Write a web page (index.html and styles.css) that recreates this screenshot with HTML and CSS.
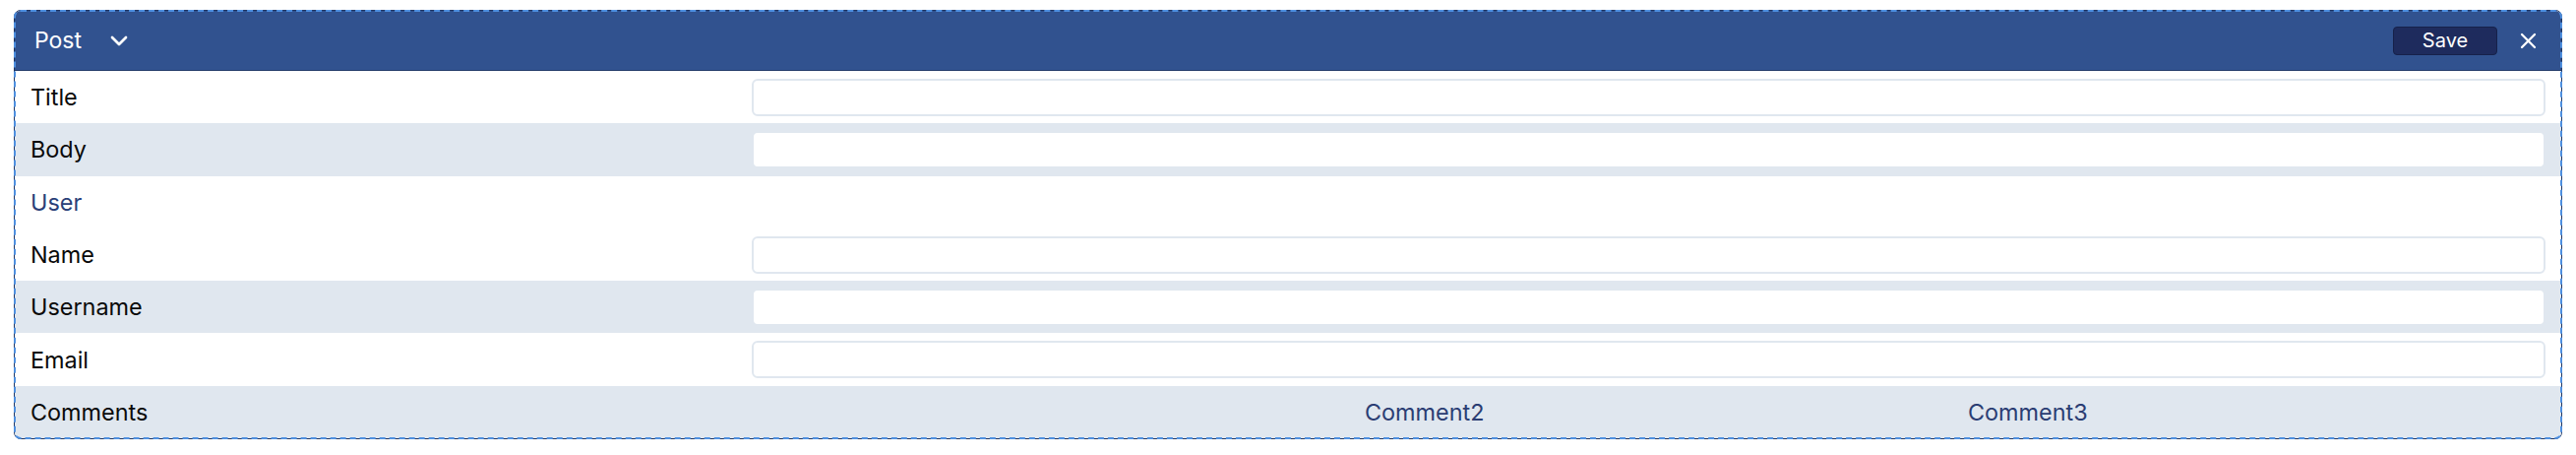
FILE: index.html
```html
<!DOCTYPE html>
<html>
<head>
<meta charset="utf-8">
<link rel="stylesheet" href="styles.css">
</head>
<body>
<div class="panel">
  <div class="panel-header">
    <div class="header-left">
      <span class="header-title">Post</span>
      <svg class="chevron" width="18" height="11" viewBox="0 0 18 11"><path d="M2 2 L9 9 L16 2" fill="none" stroke="#fff" stroke-width="2.7" stroke-linecap="round" stroke-linejoin="round"/></svg>
    </div>
    <div class="header-right">
      <button class="save-btn">Save</button>
      <svg class="close" width="17" height="17" viewBox="0 0 17 17"><path d="M2 2 L15 15 M15 2 L2 15" stroke="#fff" stroke-width="2.3" stroke-linecap="round"/></svg>
    </div>
  </div>
  <div class="rows">
    <div class="row">
      <div class="label">Title</div>
      <div class="value"><input class="field" type="text"></div>
    </div>
    <div class="row">
      <div class="label">Body</div>
      <div class="value"><input class="field" type="text"></div>
    </div>
    <div class="group">
      <div class="row group-title"><div class="label">User</div></div>
      <div class="group-rows">
        <div class="row">
          <div class="label">Name</div>
          <div class="value"><input class="field" type="text"></div>
        </div>
        <div class="row">
          <div class="label">Username</div>
          <div class="value"><input class="field" type="text"></div>
        </div>
        <div class="row">
          <div class="label">Email</div>
          <div class="value"><input class="field" type="text"></div>
        </div>
      </div>
    </div>
    <div class="row">
      <div class="label">Comments</div>
      <div class="comments">
        <span class="comment"></span>
        <span class="comment">Comment2</span>
        <span class="comment">Comment3</span>
      </div>
    </div>
  </div>
</div>
</body>
</html>
```

FILE: styles.css
```css
html, body {
  margin: 0;
  background: #ffffff;
}
body {
  padding: 10px 14px;
  font-family: "Inter", "Liberation Sans", sans-serif;
  font-size: 23.4px;
  color: #0a0a0a;
}
.panel {
  border: 1px solid #1f3562;
  outline: 2px dashed #4f90e0;
  outline-offset: -2px;
  border-radius: 7px;
  overflow: hidden;
  background: #ffffff;
}
.panel-header {
  height: 61px;
  box-sizing: border-box;
  background: #31528f;
  border-bottom: 1px solid #243c6a;
  display: flex;
  align-items: center;
  justify-content: space-between;
  padding: 0 25px 0 20px;
  color: #ffffff;
}
.header-left {
  display: flex;
  align-items: center;
  gap: 29px;
}
.header-title {
  font-size: 23px;
}
.chevron {
  display: block;
  margin-top: 1px;
}
.header-right {
  display: flex;
  align-items: center;
  gap: 23px;
}
.save-btn {
  width: 106px;
  height: 29px;
  background: #1e2b5d;
  border: 1px solid #16214a;
  border-radius: 4px;
  color: #ffffff;
  font-family: "Inter", "Liberation Sans", sans-serif;
  font-size: 20px;
  padding: 0;
}
.close {
  display: block;
}
.row {
  height: 53.3px;
  box-sizing: border-box;
  display: grid;
  grid-template-columns: 733px 1fr;
  align-items: center;
  padding: 0 16px;
  background: #ffffff;
}
.rows > .row:nth-child(even),
.group-rows > .row:nth-child(even) {
  background: #e0e7ef;
}
.group-title .label {
  color: #2a3f78;
}
.field {
  display: block;
  width: 100%;
  height: 38px;
  box-sizing: border-box;
  border: 2px solid #e0e7ef;
  border-radius: 6px;
  background: #ffffff;
  outline: none;
}
.comments {
  display: grid;
  grid-template-columns: repeat(3, 1fr);
  margin-right: -16px;
}
.comment {
  padding-left: 10px;
  color: #2b3d73;
}
```
